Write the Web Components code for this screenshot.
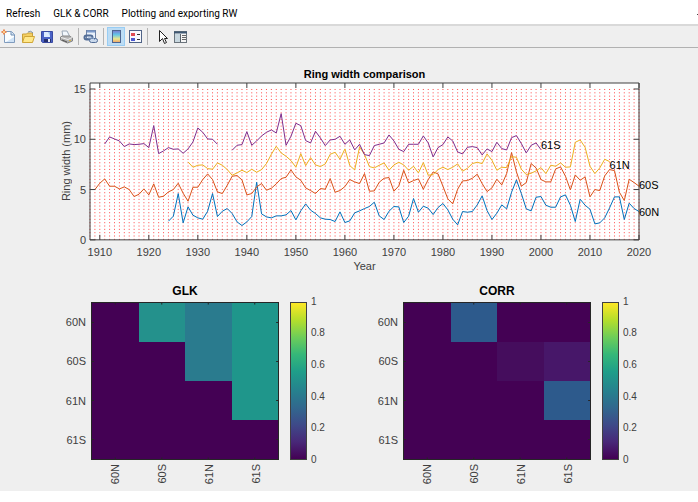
<!DOCTYPE html>
<html lang="en">
<head>
<meta charset="utf-8">
<title>Ring width comparison</title>
<style>
  html, body { margin: 0; background: #fff; }
  body { font: 11px/12px "Liberation Sans", Arial, sans-serif; color: #404040; }
</style>
</head>
<body>
<figure-window>
  <menu-bar slot="menu">
    <menu-entry>Refresh</menu-entry>
    <menu-entry>GLK &amp; CORR</menu-entry>
    <menu-entry>Plotting and exporting RW</menu-entry>
  </menu-bar>
  <tool-bar slot="tools">
    <tool-button icon="new" label="New figure"></tool-button>
    <tool-button icon="open" label="Open file"></tool-button>
    <tool-button icon="save" label="Save figure"></tool-button>
    <tool-button icon="print" label="Print figure"></tool-button>
    <tool-separator></tool-separator>
    <tool-button icon="link" label="Link plot"></tool-button>
    <tool-separator></tool-separator>
    <tool-button icon="colorbar" label="Insert colorbar" pressed></tool-button>
    <tool-button icon="legend" label="Insert legend"></tool-button>
    <tool-separator></tool-separator>
    <tool-button icon="pointer" label="Edit plot"></tool-button>
    <tool-button icon="inspector" label="Open property inspector"></tool-button>
  </tool-bar>
  <line-chart>
    <span slot="title">Ring width comparison</span>
    <span slot="ylabel">Ring width (mm)</span>
    <span slot="xlabel">Year</span>
  </line-chart>
  <heat-map slot="maps" cells="#440154 #24918c #2a7b8e #1f968b|#440154 #440154 #2a7b8e #1f968b|#440154 #440154 #440154 #1f968b|#440154 #440154 #440154 #440154">GLK</heat-map>
  <heat-map slot="maps" cells="#440154 #2d5a8c #440154 #440154|#440154 #440154 #450d5d #471769|#440154 #440154 #440154 #2d5a8c|#440154 #440154 #440154 #440154">CORR</heat-map>
</figure-window>
<script>
class Base extends HTMLElement {
  constructor() {
    super();
    this.attachShadow({ mode: 'open' });
  }
  connectedCallback() {
    this.shadowRoot.innerHTML = this.render();
  }
}

customElements.define('figure-window', class extends Base {
  render() {
    return `<style>
      :host { display: block; }
      main { display: flow-root; background: #efefef; padding-top: 20px; }
      .maps { display: grid; grid-template-columns: 1fr 1fr; column-gap: 27px; padding: 14px 50px 0 51px; }
    </style>
    <slot name="menu"></slot>
    <slot name="tools"></slot>
    <main>
      <slot></slot>
      <div class="maps"><slot name="maps"></slot></div>
    </main>`;
  }
});

customElements.define('menu-bar', class extends Base {
  render() {
    return `<style>
      :host { display: block; background: #fff; }
      nav { display: flex; align-items: center; gap: 13px; height: 24px; padding-left: 6px; padding-top: 4px; box-sizing: border-box; }
      svg { margin-left: auto; display: block; }
    </style>
    <nav><slot></slot><svg width="1" height="1" aria-hidden="true"><rect width="1" height="1" fill="#444"/></svg></nav>`;
  }
});

customElements.define('menu-entry', class extends Base {
  render() {
    return `<style>
      :host { display: block; }
      button { border: 0; padding: 0; background: none; color: #000; font: 10px/16px Roboto, "Noto Sans", sans-serif; white-space: nowrap; display: block; }
    </style>
    <button type="button"><slot></slot></button>`;
  }
});

customElements.define('tool-bar', class extends Base {
  render() {
    return `<style>
      :host { display: block; background: #efefef; border-top: 2px solid #d9d9d9; border-bottom: 1px solid #b1b1b1; }
      div { display: flex; gap: 1px; height: 21px; align-items: center; }
    </style>
    <div role="toolbar" aria-label="Figure tools"><slot></slot></div>`;
  }
});

customElements.define('tool-separator', class extends Base {
  render() {
    return `<style>:host { display: block; width: 1px; height: 17px; margin: 0 2px; background: #b4b4b4; }</style>`;
  }
});

const ICONS = {
  new: `<path d="M3.5 2.5h7l3 3v8h-10z" fill="#fafdff" stroke="#7f9bbd"/><path d="M10 3v3h4" fill="#d5e3f2" stroke="#6f8fb4"/><path d="M5 13h8V8z" fill="#cfe2f5"/><path d="M3 .5v5M.5 3h5" stroke="#e88a58" stroke-width="2"/><circle cx="3" cy="3" r="1" fill="#ffe29a"/>`,
  open: `<path d="M2.5 13V5h4l1-1h5v9z" fill="#f4cf62" stroke="#c8a03b"/><path d="M2.5 13.5l2-6h10l-2 6z" fill="#ffe88b" stroke="#cfa639"/><path d="M8 3q3-2 5 1" fill="none" stroke="#7f93a8"/>`,
  save: `<path d="M2.5 2.5h11v11h-10l-1-1z" fill="#4a62c6" stroke="#3a4aa2"/><path d="M5 3h6v5H5z" fill="#dceaff"/><path d="M9 3h2v4z" fill="#9bc0ef"/><path d="M5 10h7v3H5z" fill="#25306d"/><path d="M9 10h2v3H9z" fill="#e8edf8"/>`,
  print: `<path d="M5 8l-1-6h5l3 6z" fill="#f3f8fd" stroke="#9ba8b7"/><path d="M2.5 8l2-1h7l3 2v3l-5 2-7-3z" fill="#b4b4b4" stroke="#858585"/><path d="M3 8.5l7 2 4-2" stroke="#eee" fill="none"/><path d="M4 11l5 2" stroke="#555"/><rect x="11" y="11" width="2" height="1" fill="#d6b649"/>`,
  link: `<rect x="3.5" y="1.5" width="9" height="8" fill="#e8f0fa" stroke="#6d82a6"/><path d="M4 2.5h8" stroke="#7d9ac9" stroke-width="2"/><rect x="1.5" y="6.500" width="8" height="4" rx="2" fill="none" stroke="#526d97" stroke-width="2"/><rect x="6.5" y="9.5" width="8" height="4" rx="2" fill="#c9d8eb" stroke="#526d97"/><path d="M5 9h5l2 2" stroke="#88a4ca" fill="none"/>`,
  colorbar: `<defs><linearGradient id="g" x2="0" y2="1"><stop stop-color="#7a78cf"/><stop offset=".35" stop-color="#61c6e8"/><stop offset=".7" stop-color="#ece68b"/><stop offset="1" stop-color="#ed9f69"/></linearGradient></defs><rect x="4.5" y="1.5" width="8" height="12" fill="url(#g)" stroke="#4d6590"/>`,
  legend: `<rect x="2.5" y="1.5" width="12" height="12" fill="#f7f9fd" stroke="#4f6387"/><path d="M4 4h4v3H4z" fill="#df4b54"/><path d="M4 9h4v3H4z" fill="#4c59d0"/><path d="M10 5.5h3M10 10.5h3" stroke="#333"/>`,
  pointer: `<path d="M7.5 1.500v11l3-3 2 5 2-1-2-4h3z" fill="#fff" stroke="#222" stroke-linejoin="round"/>`,
  inspector: `<rect x="3.5" y="2.5" width="12" height="11" fill="#f5f5f5" stroke="#6b747c"/><path d="M3 3.5h13" stroke="#3f5873" stroke-width="2"/><path d="M4 5h5v8H4z" fill="#c8d7df"/><path d="M9.5 5v8" stroke="#59636b"/><path d="M11 6.5h4M11 8.5h4M11 10.5h4" stroke="#666"/>`
};

customElements.define('tool-button', class extends Base {
  render() {
    const pressed = this.hasAttribute('pressed');
    return `<style>
      :host { display: block; }
      button { width: 18px; height: 19px; padding: 0; border: 1px solid transparent; background: none; display: grid; place-items: center; }
      button[aria-pressed="true"] { background: #bcdcf4; border-color: #98cdf4; }
      svg { display: block; }
    </style>
    <button type="button" aria-label="${this.getAttribute('label')}" aria-pressed="${pressed}"><svg width="16" height="16" viewBox="0 0 16 16" fill="none">${ICONS[this.getAttribute('icon')]}</svg></button>`;
  }
});

/* Plot space: 10 units per year from 1908; the vertical axis runs from 70 (top) to 541 (0 mm). */
const FIRST = 1908, LAST = 2020, TOP = 70, BOTTOM = 541, FIVE_MM = 151;
const SERIES = [
  { color: '#0072bd', from: 1924, y: [485,470,402,490,442,467,475,479,455,402,471,455,447,462,487,498,487,471,368,463,472,475,469,469,466,453,481,454,433,452,462,475,479,480,486,457,489,484,460,454,447,441,428,469,480,455,441,442,489,470,417,458,440,446,465,444,432,451,479,496,456,458,456,436,409,453,480,461,436,448,398,361,402,448,454,413,411,437,443,443,412,406,437,486,419,437,449,493,490,475,445,412,412,480,431,447,456] },
  { color: '#d95319', from: 1909, y: [390,371,358,380,380,388,382,390,411,404,388,406,373,413,410,397,390,371,401,425,383,383,360,343,360,397,402,377,350,348,361,406,402,382,372,392,386,373,357,353,331,352,362,385,393,402,387,389,357,398,393,381,360,367,372,342,395,394,368,356,354,395,379,332,370,363,358,389,360,337,343,380,418,433,389,364,363,356,344,372,396,385,359,376,342,279,337,380,369,312,325,360,367,367,328,322,350,391,346,362,352,412,390,393,349,330,333,398,423,359,369,380] },
  { color: '#edb120', from: 1928, y: [307,323,317,316,327,329,310,317,330,347,340,332,339,329,338,330,312,284,260,280,290,303,323,282,318,294,316,321,313,284,278,299,268,318,331,262,285,321,325,317,310,332,316,308,316,332,320,340,309,347,345,330,323,330,323,313,335,326,312,308,312,283,302,332,323,324,291,293,329,345,341,334,324,342,317,320,310,323,322,248,241,263,320,342,325,299,306] },
  { color: '#7e2f8e', from: 1911, y: [253,232,238,244,261,253,255,254,252,264,198,282,274,264,269,268,281,268,247,205,218,238,239,254] },
  { color: '#7e2f8e', from: 1937, y: [272,257,255,216,257,244,229,218,211,220,162,257,230,191,198,243,250,215,235,258,241,239,230,254,241,271,254,285,288,258,254,250,226,244,269,276,254,254,254,229,250,292,264,255,232,244,277,283,263,261,264,286,268,276,248,267,271,234,228,252,280,257,250,270] }
];
const TAGS = [['61S', 2000, 255], ['61N', 2014, 317], ['60S', 2020, 377], ['60N', 2020, 456]];

customElements.define('line-chart', class extends Base {
  render() {
    const px = year => (year - FIRST) * 10;
    const width = px(LAST);
    const height = BOTTOM - TOP;
    const axisTop = BOTTOM - 3 * FIVE_MM;
    let dots = '', ticks = '';
    for (let y = FIRST; y <= LAST; y++) dots += `M${px(y)} ${BOTTOM}V${axisTop}`;
    const years = [];
    for (let y = 1910; y <= LAST; y += 10) {
      years.push(y);
      ticks += `M${px(y)} ${BOTTOM}v-15M${px(y)} ${TOP}v15`;
    }
    for (let k = 0; k <= 3; k++) ticks += `M0 ${BOTTOM - k * FIVE_MM}h11M${width} ${BOTTOM - k * FIVE_MM}h-11`;
    const lines = SERIES.map(s => `<polyline stroke="${s.color}" points="${s.y.map((v, i) => px(s.from + i) + ',' + v).join(' ')}"/>`).join('');
    const tags = TAGS.map(([t, x, y]) => `<span class="tag" style="left:${px(x) / width * 100}%;top:${(y - TOP) / height * 100}%">${t}</span>`).join('');
    return `<style>
      :host { display: grid; grid-template-columns: 72px 18px 1fr 59px; grid-template-rows: 15px auto 18px 12px; }
      .title { grid-column: 3; text-align: center; font-weight: bold; color: #000; }
      .ylabel { grid-column: 1; grid-row: 2; justify-self: end; align-self: center; writing-mode: vertical-rl; transform: rotate(180deg); white-space: nowrap; }
      .yticks { grid-column: 2; grid-row: 2; display: flex; flex-direction: column; justify-content: space-between; box-sizing: border-box; margin-top: 6px; padding-right: 4px; }
      .yticks span { height: 0; display: flex; align-items: center; justify-content: flex-end; }
      .plot { grid-column: 3; grid-row: 2; position: relative; aspect-ratio: 7 / 2; background: #fff; }
      svg { display: block; width: 100%; height: 100%; overflow: visible; }
      polyline, rect, .ticks { vector-effect: non-scaling-stroke; }
      .xticks { grid-column: 3; grid-row: 3; display: flex; justify-content: space-between; padding-left: ${px(1910) / width * 100}%; padding-top: 6px; }
      .xticks span { width: 0; display: flex; justify-content: center; }
      .xlabel { grid-column: 3; grid-row: 4; text-align: center; padding-top: 2px; }
      .tag { position: absolute; transform: translateY(-50%); color: #000; }
    </style>
    <div class="title"><slot name="title"></slot></div>
    <div class="ylabel"><slot name="ylabel"></slot></div>
    <div class="yticks">${[15, 10, 5, 0].map(v => `<span>${v}</span>`).join('')}</div>
    <div class="plot">
      <svg viewBox="0 ${TOP} ${width} ${height}" preserveAspectRatio="none" fill="none" role="img" aria-label="Ring width by year">
        <path d="${dots}" stroke="#f22" stroke-width="2" stroke-dasharray="3 7"/>
        <g stroke-linejoin="round">${lines}</g>
        <path class="ticks" d="${ticks}" stroke="#404040" shape-rendering="crispEdges"/>
        <rect y="${TOP}" width="${width}" height="${height}" stroke="#404040" shape-rendering="crispEdges"/>
      </svg>
      ${tags}
    </div>
    <div class="xticks">${years.map(v => `<span>${v}</span>`).join('')}</div>
    <div class="xlabel"><slot name="xlabel"></slot></div>`;
  }
});

customElements.define('heat-map', class extends Base {
  render() {
    const names = ['60N', '60S', '61N', '61S'];
    const labels = names.map(n => `<span>${n}</span>`).join('');
    const cells = this.getAttribute('cells').split(/[| ]/).map(c => `<i style="background:${c}"></i>`).join('');
    let ticks = '';
    for (const p of [12.5, 37.5, 62.5, 87.5]) ticks += `M${p} 0v1M${p} 100v-1M0 ${p}h1M100 ${p}h-1`;
    return `<style>
      :host { display: grid; grid-template-columns: 40px 1fr 11px 17px 29px; grid-template-rows: 18px auto 31px; min-width: 0; }
      .title { grid-column: 2; text-align: center; font-size: 12px; font-weight: bold; color: #000; padding-top: 1px; }
      .rows { grid-column: 1; grid-row: 2; display: grid; grid-template-rows: repeat(4, 1fr); align-items: center; justify-items: end; padding-right: 5px; }
      .map { grid-column: 2; grid-row: 2; position: relative; aspect-ratio: 188 / 158; display: grid; grid-template: repeat(4, 1fr) / repeat(4, 1fr); border: 1px solid #262626; box-sizing: border-box; background: #440154; }
      svg { position: absolute; inset: 0; width: 100%; height: 100%; }
      svg path { vector-effect: non-scaling-stroke; }
      .cols { grid-column: 2; grid-row: 3; display: grid; grid-template-columns: repeat(4, 1fr); justify-items: center; align-items: start; padding-top: 4px; }
      .cols span { writing-mode: vertical-rl; transform: rotate(180deg); }
      .bar { grid-column: 4; grid-row: 2; border: 1px solid #404040; background: linear-gradient(to top, #440154, #482878 11%, #3e4a89 22%, #31688e 33%, #26828e 44%, #1f9e89 56%, #35b779 67%, #6dcd59 78%, #b4de2c 89%, #fde725); }
      .scale { grid-column: 5; grid-row: 2; display: flex; flex-direction: column; justify-content: space-between; padding-left: 4px; font-size: 10px; }
      .scale span { height: 0; display: flex; align-items: center; }
    </style>
    <div class="title"><slot></slot></div>
    <div class="rows">${labels}</div>
    <div class="map">${cells}<svg viewBox="0 0 100 100" preserveAspectRatio="none" aria-hidden="true"><path d="${ticks}" stroke="#262626"/></svg></div>
    <div class="cols">${labels}</div>
    <div class="bar"></div>
    <div class="scale">${['1', '0.8', '0.6', '0.4', '0.2', '0'].map(v => `<span>${v}</span>`).join('')}</div>`;
  }
});
</script>
</body>
</html>
